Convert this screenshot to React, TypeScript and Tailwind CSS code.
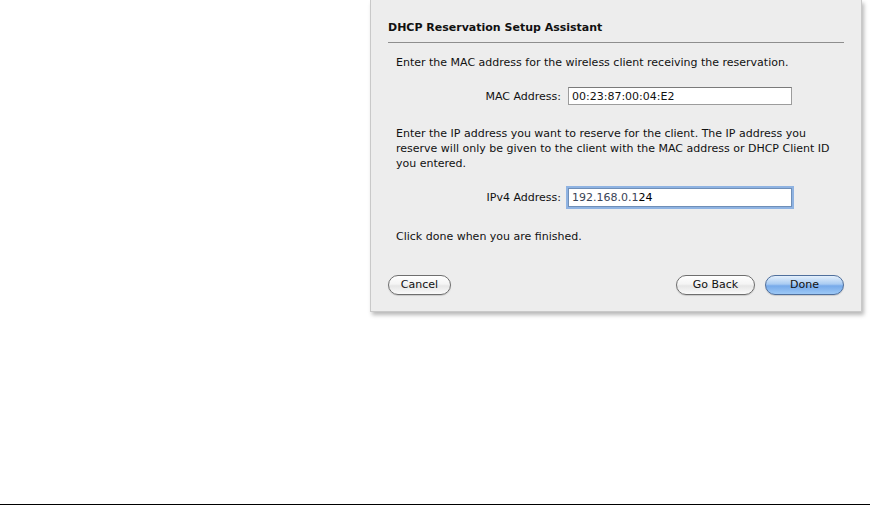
import React from "react";

const font = { fontFamily: '"DejaVu Sans", "Liberation Sans", sans-serif' };

function AquaButton({ label, primary, width }: { label: string; primary?: boolean; width: string }) {
  return (
    <div
      className={`${width} h-[20px] rounded-full flex items-center justify-center text-[11px] text-[#111] border ${
        primary
          ? "border-[#4f6f9c] bg-[linear-gradient(to_bottom,#e4f0fc_0%,#a9cbf2_45%,#77aaea_55%,#9cc8f6_100%)]"
          : "border-[#6e6e6e] bg-[linear-gradient(to_bottom,#ffffff_0%,#f4f4f4_45%,#e6e6e6_55%,#fafafa_100%)]"
      } shadow-[0_1px_1px_rgba(0,0,0,0.15)]`}
    >
      {label}
    </div>
  );
}

export default function App() {
  return (
    <div className="w-[870px] h-[506px] bg-white flex flex-col" style={font}>
      <div className="flex-1 pl-[370px]">
        <div className="w-[492px] h-[312px] bg-[#ededed] border-x border-b border-[#c9c9c9] shadow-[2px_3px_4px_rgba(0,0,0,0.28)] flex flex-col pl-[17px] pr-[17px]">
          <div className="pt-[20px] h-[43px] text-[11px] font-bold text-[#111] leading-[16px] border-b border-[#8e8e8e]">
            DHCP Reservation Setup Assistant
          </div>
          <div className="pl-[8px] text-[11px] text-[#111] leading-[15px]">
            <div className="mt-[12px]">Enter the MAC address for the wireless client receiving the reservation.</div>
            <div className="flex items-center mt-[17px]">
              <div className="w-[172px] text-right pr-[7px]">MAC Address:</div>
              <div className="w-[224px] h-[18px] bg-white border border-[#9c9c9c] border-t-[#7a7a7a] flex items-center pl-[3px] text-[11px]">
                00:23:87:00:04:E2
              </div>
            </div>
            <div className="mt-[21px] w-[450px]">
              Enter the IP address you want to reserve for the client. The IP address you reserve will only be given to the
              client with the MAC address or DHCP Client ID you entered.
            </div>
            <div className="flex items-center mt-[17px]">
              <div className="w-[172px] text-right pr-[7px]">IPv4 Address:</div>
              <div className="w-[224px] h-[19px] bg-white border border-[#6f8fb8] ring-2 ring-[#8fb3e2] flex items-center pl-[3px] text-[11px]">
                <span className="text-[#3a4456]">192.168.0.1</span>
                <span className="text-[#000]">24</span>
              </div>
            </div>
            <div className="mt-[22px]">Click done when you are finished.</div>
          </div>
          <div className="flex items-center mt-[31px]">
            <AquaButton label="Cancel" width="w-[63px]" />
            <div className="flex-1" />
            <AquaButton label="Go Back" width="w-[79px]" />
            <div className="w-[10px]" />
            <AquaButton label="Done" primary width="w-[79px]" />
          </div>
        </div>
      </div>
      <div className="h-px bg-black" />
      <div className="h-px" />
    </div>
  );
}
